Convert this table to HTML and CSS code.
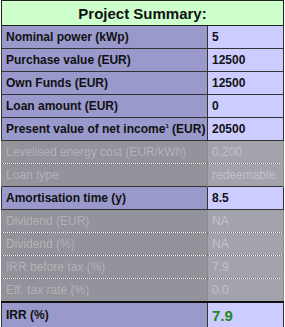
FILE: index.html
```html
<!DOCTYPE html>
<html>
<head>
<meta charset="utf-8">
<link rel="stylesheet" href="styles.css">
</head>
<body>
<table class="summary">
  <colgroup><col class="ck"><col class="cv"></colgroup>
  <tr class="head"><th colspan="2">Project Summary:</th></tr>
  <tr><td class="k">Nominal power (kWp)</td><td class="v">5</td></tr>
  <tr><td class="k">Purchase value (EUR)</td><td class="v">12500</td></tr>
  <tr><td class="k">Own Funds (EUR)</td><td class="v">12500</td></tr>
  <tr><td class="k">Loan amount (EUR)</td><td class="v">0</td></tr>
  <tr><td class="k">Present value of net income<sup>1</sup> (EUR)</td><td class="v">20500</td></tr>
  <tr class="off"><td class="k">Levelised energy cost (EUR/kWh)</td><td class="v">0.200</td></tr>
  <tr class="off"><td class="k">Loan type</td><td class="v">redeemable</td></tr>
  <tr><td class="k">Amortisation time (y)</td><td class="v">8.5</td></tr>
  <tr class="off"><td class="k">Dividend (EUR)</td><td class="v">NA</td></tr>
  <tr class="off"><td class="k">Dividend (%)</td><td class="v">NA</td></tr>
  <tr class="off"><td class="k">IRR before tax (%)</td><td class="v">7.9</td></tr>
  <tr class="off"><td class="k">Eff. tax rate (%)</td><td class="v">0.0</td></tr>
  <tr class="irr"><td class="k">IRR (%)</td><td class="v">7.9</td></tr>
</table>
</body>
</html>
```
FILE: styles.css
```css
html, body { margin: 0; padding: 0; background: #ffffff; }
.summary {
  margin: 0 0 0 1px;
  width: 283px;
  table-layout: fixed;
  border-collapse: collapse;
  border: 1px solid #222;
  font-family: "Liberation Sans", Arial, sans-serif;
  font-weight: bold;
  font-size: 12px;
  color: #111;
}
.summary col.ck { width: 206px; }
.summary th {
  height: 24px;
  padding: 0;
  background: #ccffcc;
  font-size: 15px;
  text-align: center;
  border-bottom: 1px solid #222;
}
.summary td {
  height: 22px;
  padding: 0 0 0 4px;
  border: 1px solid #333;
  white-space: nowrap;
  overflow: hidden;
}
.summary td.k { background: #9999cc; }
.summary td.v { background: #ccccff; }
.summary sup { font-size: 6px; vertical-align: 5px; }
.summary tr.off td {
  font-weight: normal;
  border-top: 1px dotted #6f6f6f;
  border-bottom: 1px dotted #6f6f6f;
  border-left-color: #8a8a8a;
  border-right-color: #8a8a8a;
}
.summary tr.off td.k {
  color: #b2b2b6;
  background: #9c9ca4 radial-gradient(circle at 1px 1px, #8e8e96 0.6px, transparent 0.9px);
  background-size: 2px 2px;
}
.summary tr.off td.v {
  color: #c2c2c6;
  background: #acacb4 radial-gradient(circle at 1px 1px, #9e9ea6 0.6px, transparent 0.9px);
  background-size: 2px 2px;
}
.summary tr.irr td {
  height: 24px;
  border-top: 2px solid #111;
}
.summary tr.irr td.v { color: #1a8a1a; font-size: 15px; }
```
